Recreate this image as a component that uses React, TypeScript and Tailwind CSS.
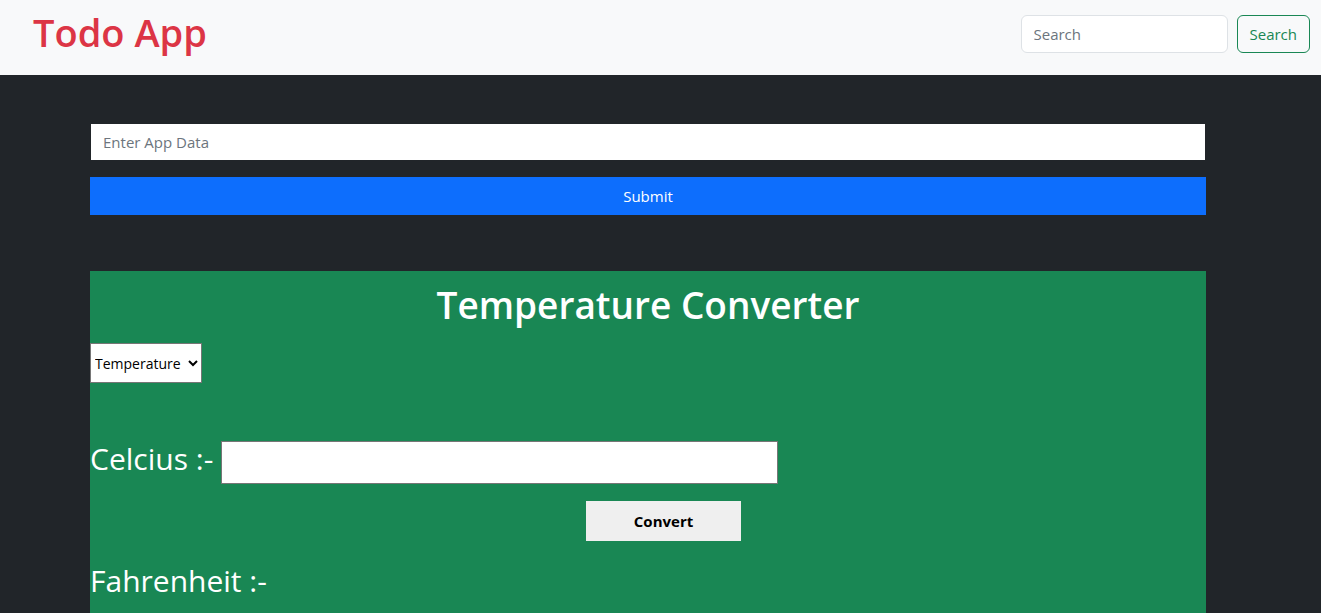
import React from 'react';

const font = { fontFamily: '"Segoe UI", "Open Sans", "Noto Sans", sans-serif' };

const Navbar: React.FC = () => {
  return (
    <nav className="flex h-[75px] items-start justify-between bg-[#f8f9fa] pl-[33px] pr-[11px] pt-[15px]">
      <span className="-mt-[5px] text-[38px] font-semibold leading-[1.2] text-[#dc3545]">Todo App</span>
      <form className="flex items-center gap-[9px]" onSubmit={(e) => e.preventDefault()}>
        <input
          type="search"
          placeholder="Search"
          className="h-[38px] w-[207px] rounded-md border border-[#dee2e6] bg-white px-3 text-[15px] text-[#212529] placeholder:text-[#6c757d] outline-none"
        />
        <button className="h-[38px] rounded-md border border-[#198754] px-[12px] text-[15px] text-[#198754]">Search</button>
      </form>
    </nav>
  );
};

const TempConverter: React.FC = () => {
  return (
    <section className="bg-[#198754] pb-[20px] text-white">
      <h1 className="pt-[12px] text-center text-[37px] font-semibold leading-[1.2]">Temperature Converter</h1>
      <select className="mt-[16px] h-[40px] w-[112px] border border-[#767676] bg-white px-0 text-[14px] text-black">
        <option>Temperature</option>
      </select>
      <div className="mt-[58px] flex items-center gap-[8px]">
        <label className="mb-[8px] text-[30px] leading-none">Celcius :-</label>
        <input type="text" className="h-[43px] w-[557px] border border-[#767676] bg-white text-black outline-none" />
      </div>
      <button className="ml-[496px] mt-[17px] h-[40px] w-[155px] bg-[#efefef] text-[15px] font-bold text-black">Convert</button>
      <h2 className="mt-[22px] text-[30px] leading-[1.2]">Fahrenheit :-</h2>
    </section>
  );
};

export default function App() {
  return (
    <div style={font} className="min-h-[613px] bg-[#212529]">
      <Navbar />
      <main className="ml-[90px] w-[1116px] pt-[49px]">
        <input
          type="text"
          placeholder="Enter App Data"
          className="ml-[1px] block h-[36px] w-[1114px] bg-white px-3 text-[15px] text-[#212529] placeholder:text-[#6c757d] outline-none"
        />
        <button className="mt-[17px] block h-[38px] w-full bg-[#0d6efd] text-[15px] text-white">Submit</button>
        <div className="mt-[56px]">
          <TempConverter />
        </div>
      </main>
    </div>
  );
}
